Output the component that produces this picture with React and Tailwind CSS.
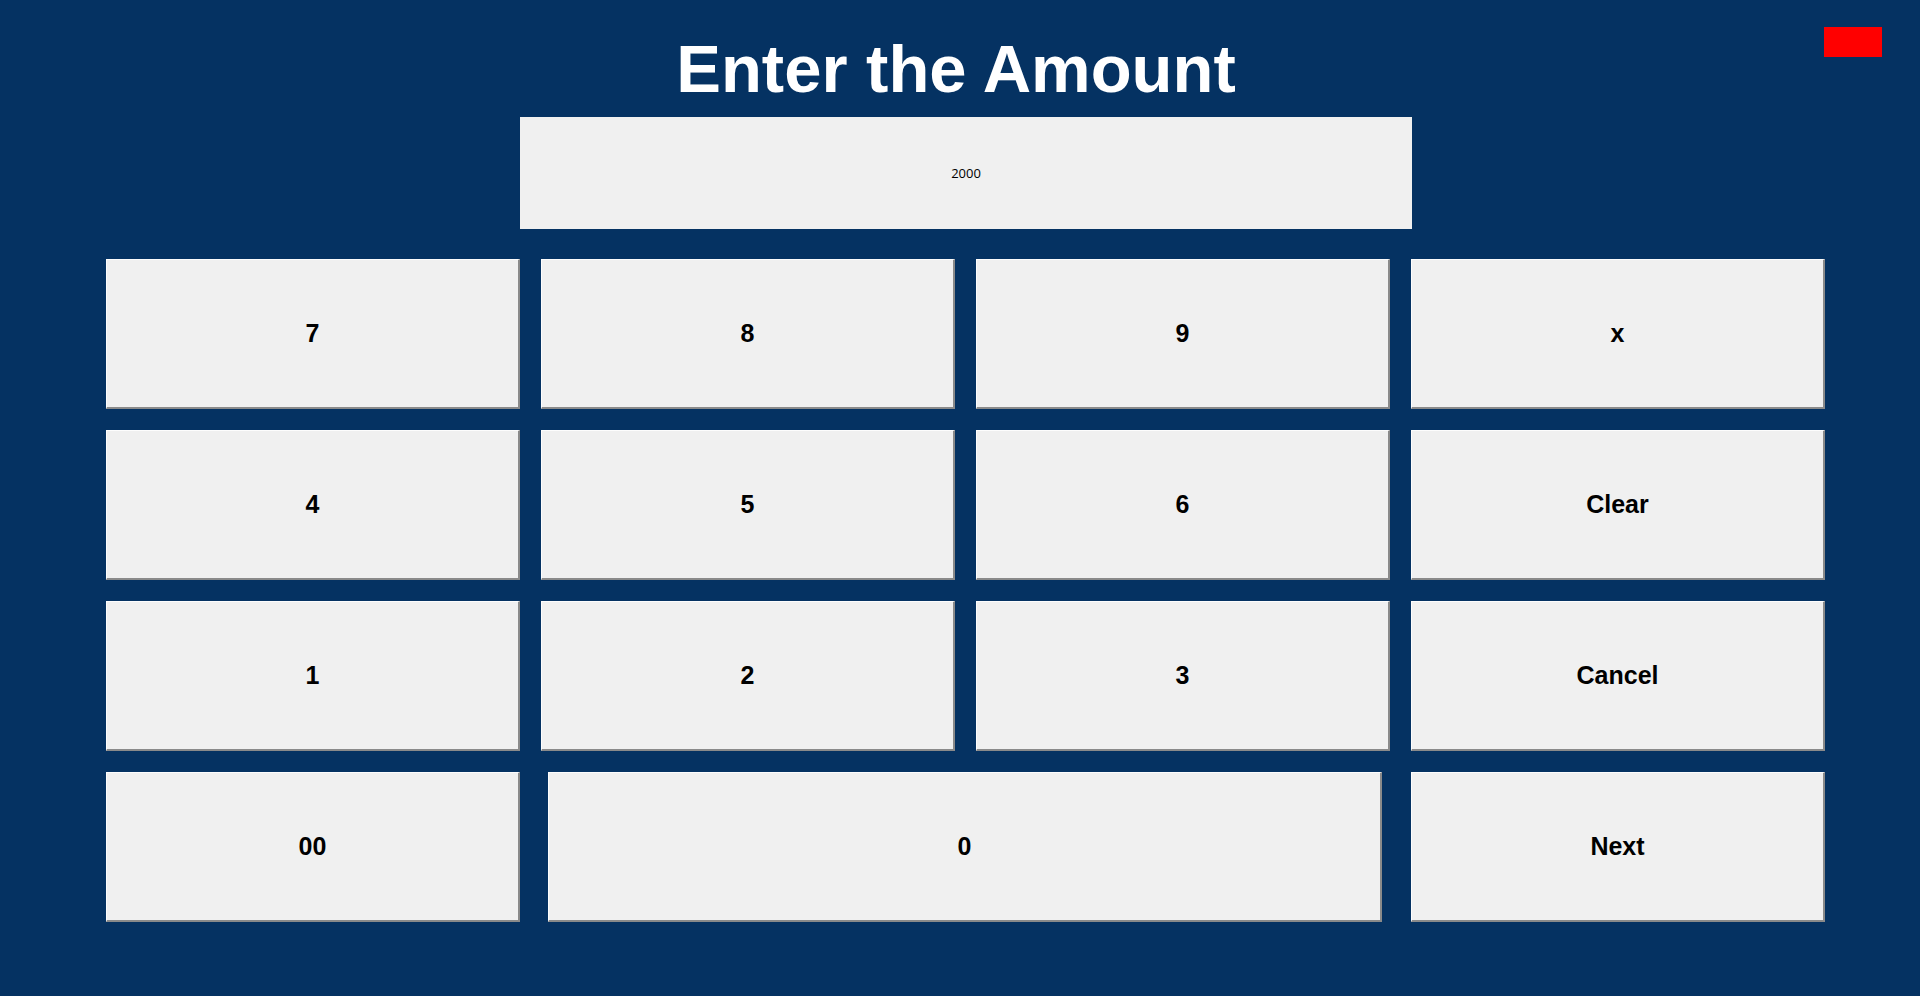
import React, { useState } from "react";

const keys = [
  ["7", "8", "9", "x"],
  ["4", "5", "6", "Clear"],
  ["1", "2", "3", "Cancel"],
];

const KeyButton = ({ label, onClick, className = "" }) => (
  <button
    type="button"
    onClick={() => onClick(label)}
    className={`h-[150px] bg-[#f0f0f0] border-t border-l border-t-[#fdfdfd] border-l-[#fdfdfd] border-b-2 border-r-2 border-b-[#8a8a8a] border-r-[#8a8a8a] text-[25px] font-bold text-black font-['Liberation_Sans',Arial,sans-serif] ${className}`}
  >
    {label}
  </button>
);

const App = () => {
  const [amount, setAmount] = useState("2000");

  const handleKey = (key) => {
    if (key === "x") return setAmount((a) => a.slice(0, -1));
    if (key === "Clear") return setAmount("");
    if (key === "Cancel" || key === "Next") return;
    setAmount((a) => a + key);
  };

  return (
    <div className="relative w-full min-h-[996px] bg-[#053262] font-['Liberation_Sans',Arial,sans-serif]">
      {/* close button */}
      <div className="absolute top-[27px] left-[1824px] w-[58px] h-[30px] bg-[#ff0000]"></div>

      <h1 className="pt-[35px] pr-[8px] text-center text-[67px] leading-none font-bold text-white">
        Enter the Amount
      </h1>

      <div className="ml-[520px] mt-[15px] w-[892px] h-[112px] bg-[#f0f0f0] flex items-center justify-center">
        <span className="pt-[2px] text-[13px] text-black font-['Open_Sans','Noto_Sans',sans-serif]">
          {amount}
        </span>
      </div>

      <div className="ml-[106px] mt-[30px] w-[1719px] grid grid-cols-4 gap-x-[21px] gap-y-[21px]">
        {keys.flat().map((k) => (
          <KeyButton key={k} label={k} onClick={handleKey} />
        ))}
        <KeyButton label="00" onClick={handleKey} />
        <KeyButton label="0" onClick={handleKey} className="col-span-2 ml-[7px] mr-[8px]" />
        <KeyButton label="Next" onClick={handleKey} />
      </div>
    </div>
  );
};

export default App;
